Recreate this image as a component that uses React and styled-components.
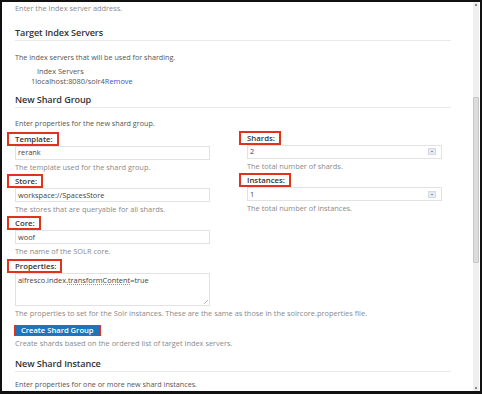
import React from "react"
import styled, { createGlobalStyle } from "styled-components"

const GlobalStyle = createGlobalStyle`
  html, body {
    margin: 0;
    padding: 0;
    background: #fff;
  }
  body {
    font-family: "Open Sans", "Liberation Sans", sans-serif;
  }
`

const Frame = styled.div`
  width: 482px;
  height: 394px;
  box-sizing: border-box;
  border: 2px solid #111;
  border-bottom-width: 3px;
  display: flex;
  overflow: hidden;
  background: #fff;
`

const Content = styled.div`
  flex: 1;
  margin-top: -1px;
  padding: 0 16px 0 13px;
  color: #444;
`

const Scrollbar = styled.div`
  width: 6px;
  margin-right: 1px;
  background: #efefef;
  display: flex;
  flex-direction: column;
  align-items: stretch;
`

const Arrow = styled.div`
  height: 6px;
  display: flex;
  align-items: center;
  justify-content: center;
  &:after {
    content: "";
    width: 2px;
    height: 2px;
    background: #888;
  }
`

const Thumb = styled.div`
  margin-top: ${p => p.$top}px;
  height: ${p => p.$height}px;
  background: #dcdcdc;
  border: 1px solid #c8c8c8;
  border-radius: 1px;
  box-sizing: border-box;
`

const Track = styled.div`
  flex: 1;
`

const Help = styled.div`
  font-size: 7.4px;
  line-height: 14.3px;
  color: #8a8a8a;
  white-space: nowrap;
`

const Heading = styled.h3`
  margin: ${p => p.$top || 0}px 6px 0 0;
  font-size: 9.1px;
  font-weight: 600;
  letter-spacing: -0.1px;
  color: #333;
  line-height: 13px;
  padding-bottom: 1px;
  border-bottom: 1px solid #e8e8e8;
`

const Para = styled.p`
  margin: ${p => p.$top || 0}px 0 0;
  font-size: 7.2px;
  line-height: 12px;
  color: #555;
`

const ServerList = styled.div`
  margin-top: 3px;
  font-size: 7.4px;
  line-height: 10px;
  color: #555;
`

const ServerTitle = styled.div`
  padding-left: 22px;
`

const ServerRow = styled.div`
  padding-left: 16px;
`

const RemoveLink = styled.a`
  color: #3b55c4;
  text-decoration: none;
`

const Grid = styled.div`
  margin-top: 3px;
  display: grid;
  grid-template-columns: 195px 195px;
  column-gap: 37px;
  align-items: start;
`

const Column = styled.div`
  display: flex;
  flex-direction: column;
  margin-top: ${p => p.$shift || 0}px;
`

const Field = styled.div`
  display: flex;
  flex-direction: column;
  align-items: flex-start;
`

const Label = styled.label`
  display: inline-block;
  margin-left: -8px;
  padding: 1px 4px 1px 6px;
  height: 8px;
  border: 2px solid #e0321c;
  font-size: 7.8px;
  font-weight: 600;
  color: #333;
  line-height: 8px;
  box-sizing: content-box;
`

const Input = styled.div`
  box-sizing: border-box;
  width: ${p => p.$w ? `${p.$w}px` : "100%"};
  height: ${p => p.$h || 14}px;
  border: 1px solid #e2e2e2;
  padding: 1px 2px;
  font-size: 7.4px;
  line-height: 11px;
  color: #444;
  display: flex;
  justify-content: space-between;
  align-items: ${p => (p.$area ? "flex-start" : "center")};
  position: relative;
`

const Spinner = styled.span`
  width: 8px;
  height: 7px;
  margin-right: 3px;
  background: #e6e9f0;
  border: 1px solid #d6dae3;
  box-sizing: border-box;
  position: relative;
  &:after {
    content: "";
    position: absolute;
    left: 2px;
    right: 2px;
    top: 2px;
    height: 1px;
    background: #7e8fb7;
  }
`

const Grip = styled.span`
  position: absolute;
  right: 1px;
  bottom: 1px;
  width: 4px;
  height: 4px;
  background: linear-gradient(135deg, transparent 45%, #bbb 46%, #bbb 55%, transparent 56%);
`

const Spell = styled.span`
  text-decoration: underline dotted #e07a7a;
  text-underline-offset: 1px;
`

const ButtonWrap = styled.div`
  margin: 5px 0 0 -1px;
  display: flex;
  width: max-content;
  border: 1.5px solid #e0321c;
`

const Button = styled.button`
  display: block;
  border: none;
  margin: 0;
  background: #1c74bd;
  color: #fff;
  font-family: inherit;
  font-size: 7.6px;
  font-weight: 600;
  line-height: 9px;
  padding: 0 6px;
  height: 9px;
`

const fieldsLeft = [
  { label: "Template:", value: "rerank", help: "The template used for the shard group." },
  { label: "Store:", value: "workspace://SpacesStore", help: "The stores that are queryable for all shards." },
  { label: "Core:", value: "woof", help: "The name of the SOLR core." },
]

const fieldsRight = [
  { label: "Shards:", value: "2", help: "The total number of shards." },
  { label: "Instances:", value: "1", help: "The total number of instances." },
]

export default function App() {
  return (
    <>
      <GlobalStyle />
      <Frame>
        <Content>
          <Help>Enter the index server address.</Help>

          <Heading $top={10.5}>Target Index Servers</Heading>
          <Para $top={10.5}>The index servers that will be used for sharding.</Para>
          <ServerList>
            <ServerTitle>Index Servers</ServerTitle>
            <ServerRow>
              1localhost:8080/solr4<RemoveLink href="#">Remove</RemoveLink>
            </ServerRow>
          </ServerList>

          <Heading $top={6.5}>New Shard Group</Heading>
          <Para $top={9}>Enter properties for the new shard group.</Para>

          <Grid>
            <Column>
              {fieldsLeft.map(f => (
                <Field key={f.label}>
                  <Label>{f.label}</Label>
                  <Input>{f.value}</Input>
                  <Help>{f.help}</Help>
                </Field>
              ))}
            </Column>
            <Column $shift={-1}>
              {fieldsRight.map(f => (
                <Field key={f.label}>
                  <Label>{f.label}</Label>
                  <Input>
                    {f.value}
                    <Spinner />
                  </Input>
                  <Help>{f.help}</Help>
                </Field>
              ))}
            </Column>
          </Grid>

          <Field>
            <Label>Properties:</Label>
            <Input $h={33} $w={195} $area>
              <span>
                alfresco.index.<Spell>transformContent</Spell>=true
              </span>
              <Grip />
            </Input>
            <Help>
              The properties to set for the Solr instances. These are the same as those in the solrcore.properties file.
            </Help>
          </Field>

          <ButtonWrap>
            <Button>Create Shard Group</Button>
          </ButtonWrap>
          <Help>Create shards based on the ordered list of target index servers.</Help>

          <Heading $top={6.5}>New Shard Instance</Heading>
          <Para $top={6.5}>Enter properties for one or more new shard instances.</Para>
        </Content>
        <Scrollbar>
          <Arrow />
          <Thumb $top={89} $height={166} />
          <Track />
          <Arrow />
        </Scrollbar>
      </Frame>
    </>
  )
}
